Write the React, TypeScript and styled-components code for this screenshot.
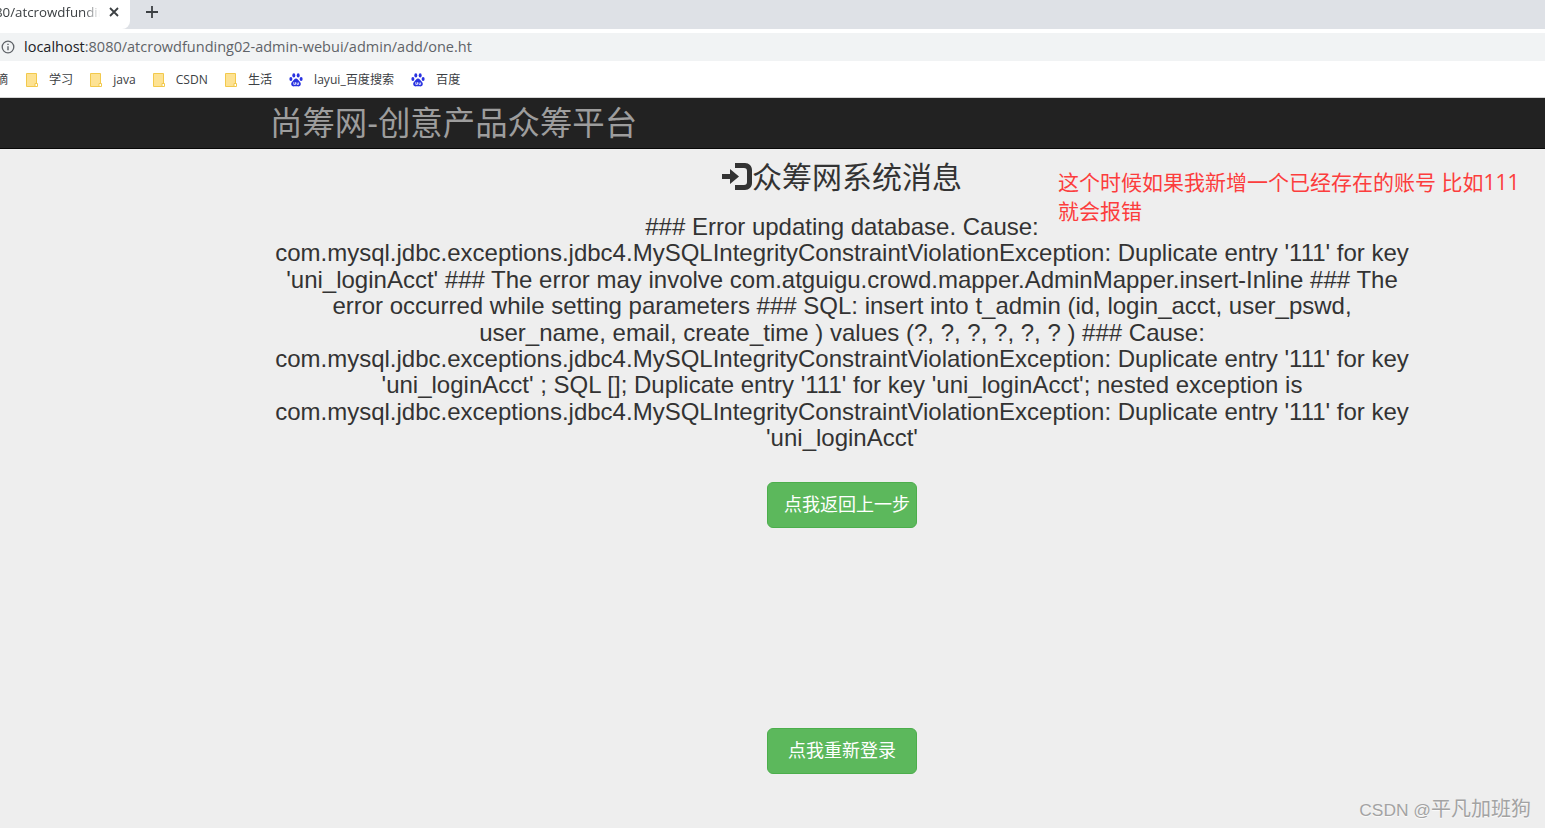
import React from 'react'
import styled, { createGlobalStyle } from 'styled-components'

const CJK = '"Liberation Sans", "Noto Sans CJK SC", sans-serif'

const GlobalStyle = createGlobalStyle`
    html, body {
        margin: 0;
        padding: 0;
        background: #eeeeee;
    }
    body {
        height: 828px;
        overflow: hidden;
        font-family: ${CJK};
    }
`

const Page = styled.div`
    position: relative;
    height: 828px;
    overflow: hidden;
`

const TabBar = styled.div`
    display: flex;
    align-items: flex-start;
    height: 29px;
    background: #dee1e6;
`

const Tab = styled.div`
    display: flex;
    align-items: center;
    width: 130px;
    height: 29px;
    background: #fff;
    border-bottom-right-radius: 8px;
    overflow: hidden;
`

const TabTitle = styled.div`
    width: 100px;
    flex: none;
    overflow: hidden;
    white-space: nowrap;
    font: 13.3px/24px "Open Sans", sans-serif;
    color: #3c4043;
    text-indent: -5px;
    margin-bottom: 5px;
    -webkit-mask-image: linear-gradient(to right, #000 84%, transparent 100%);
    mask-image: linear-gradient(to right, #000 84%, transparent 100%);
`

const CloseButton = styled.svg`
    flex: none;
    width: 10px;
    height: 10px;
    margin: 0 0 5px 9px;
`

const NewTab = styled.svg`
    flex: none;
    width: 14px;
    height: 14px;
    margin: 5px 0 0 15px;
`

const AddressRow = styled.div`
    height: 32px;
    box-sizing: border-box;
    background: #fff;
    padding-top: 4px;
`

const AddressField = styled.div`
    display: flex;
    align-items: center;
    gap: 9px;
    height: 28px;
    padding-left: 1px;
    background: #f1f3f4;
    font: 14.5px/28px "Open Sans", sans-serif;
    color: #5f6368;
    white-space: nowrap;
`

const Host = styled.span`
    color: #202124;
`

const BookmarkBar = styled.div`
    display: flex;
    align-items: center;
    box-sizing: border-box;
    height: 37px;
    padding-top: 1px;
    background: #fff;
    border-bottom: 1px solid #d6d6d6;
    font: 12.1px/35px "Open Sans", "Noto Sans CJK SC", sans-serif;
    color: #3c4043;
    white-space: nowrap;
`

const CutLabel = styled.span`
    width: 8px;
    overflow: hidden;
    direction: rtl;
    margin-right: 18px;
`

const Bookmark = styled.span`
    display: flex;
    align-items: center;
    gap: 11px;
    margin-right: 17px;
`

const Navbar = styled.nav`
    height: 50px;
    background: #222222;
    border-bottom: 1px solid #080808;
    padding-left: 270px;
    font-size: 32.4px;
    line-height: 53px;
    color: #9d9d9d;
    white-space: nowrap;
`

const Main = styled.main`
    width: 1140px;
    margin-left: 272px;
    text-align: center;
    color: #333333;
`

const Heading = styled.h2`
    display: flex;
    justify-content: center;
    align-items: center;
    margin: 12px 0 0;
    height: 33px;
    font-size: 30px;
    font-weight: 400;
    line-height: 33px;
`

const LoginIcon = styled.svg`
    flex: none;
    margin-bottom: 3px;
`

const Message = styled.h3`
    margin: 20px 0 0;
    font-size: 24px;
    font-weight: 400;
    line-height: 26.4px;
`

const Action = styled.button<{ $gap: number }>`
    display: block;
    box-sizing: border-box;
    width: 150px;
    height: 46px;
    margin: ${({ $gap }) => $gap}px auto 0;
    padding: 10px 16px;
    border: 1px solid #4cae4c;
    border-radius: 6px;
    background: #5cb85c;
    color: #fff;
    font-family: ${CJK};
    font-size: 18px;
    line-height: 24px;
    text-align: center;
    white-space: nowrap;
`

const Note = styled.div`
    position: absolute;
    left: 1058px;
    top: 168px;
    width: 470px;
    font-family: "Open Sans", "Noto Sans CJK SC", sans-serif;
    font-size: 21px;
    line-height: 29px;
    color: #fc3d3d;
`

const Watermark = styled.div`
    position: absolute;
    right: 14px;
    top: 796px;
    font-size: 17.4px;
    line-height: 26px;
    color: #a3a3a3;
    text-shadow: 0 1px 1px rgba(255, 255, 255, 0.8);
`

const WatermarkName = styled.span`
    font-size: 20px;
`

const Folder = () => (
    <svg width="12" height="14" viewBox="0 0 12 14">
        <path d="M.5.5h10v13H.5z" fill="#fde293" stroke="#f2c94c" />
        <path d="M9 10.500h2.500v3H9z" fill="#fff" stroke="#f2c94c" />
    </svg>
)

const Paw = () => (
    <svg width="14" height="14" viewBox="0 0 14 14" fill="#2932e1">
        <ellipse cx="4.800" cy="2.400" rx="1.500" ry="2.100" />
        <ellipse cx="9.200" cy="2.400" rx="1.500" ry="2.100" />
        <ellipse cx="1.900" cy="6" rx="1.500" ry="1.900" />
        <ellipse cx="12.100" cy="6" rx="1.500" ry="1.900" />
        <path d="M7 5.600c-1.600 0-2.200 1.600-3.300 2.600C2.400 9.300 1.900 10.300 2.300 11.700 2.700 13.200 4.300 13.600 5.500 13.300c1-.2 2-.2 3 0 1.200.3 2.800-.1 3.200-1.600.4-1.400-.1-2.400-1.400-3.500C9.200 7.200 8.600 5.600 7 5.600z" />
        <path d="M4.800 9.200v2.200h1.700V9.200M8 9.500v1.900h1.600V9.500" fill="none" stroke="#fff" strokeWidth=".8" />
    </svg>
)

const App = () => (
    <Page>
        <GlobalStyle />
        <TabBar>
            <Tab>
                <TabTitle>80/atcrowdfunding02-admin</TabTitle>
                <CloseButton viewBox="0 0 10 10">
                    <path d="M1 1l8 8M9 1L1 9" stroke="#3c4043" strokeWidth="1.800" />
                </CloseButton>
            </Tab>
            <NewTab viewBox="0 0 14 14">
                <path d="M7 1v12M1 7h12" stroke="#3c4043" strokeWidth="1.800" />
            </NewTab>
        </TabBar>
        <AddressRow>
            <AddressField>
                <svg width="14" height="14" viewBox="0 0 14 14" fill="none">
                    <circle cx="7" cy="7" r="5.800" stroke="#5f6368" strokeWidth="1.300" />
                    <path d="M7 6.200v4M7 3.800v1.300" stroke="#5f6368" strokeWidth="1.400" />
                </svg>
                <span>
                    <Host>localhost</Host>:8080/atcrowdfunding02-admin-webui/admin/add/one.ht
                </span>
            </AddressField>
        </AddressRow>
        <BookmarkBar>
            <CutLabel>摘</CutLabel>
            <Bookmark><Folder />学习</Bookmark>
            <Bookmark><Folder />java</Bookmark>
            <Bookmark><Folder />CSDN</Bookmark>
            <Bookmark><Folder />生活</Bookmark>
            <Bookmark><Paw />layui_百度搜索</Bookmark>
            <Bookmark><Paw />百度</Bookmark>
        </BookmarkBar>
        <Navbar>尚筹网-创意产品众筹平台</Navbar>
        <Main>
            <Heading>
                <LoginIcon width="30" height="27" viewBox="0 0 30 27" fill="#333">
                    <path d="M0 11h8V6l9 7.500-9 7.500v-5H0z" />
                    <path d="M13 0h10c4 0 7 3 7 7v13c0 4-3 7-7 7H13v-5h9c2 0 3-1 3-3V8c0-2-1-3-3-3h-9z" />
                </LoginIcon>
                众筹网系统消息
            </Heading>
            <Message>
                ### Error updating database. Cause: com.mysql.jdbc.exceptions.jdbc4.MySQLIntegrityConstraintViolationException: Duplicate entry '111' for key 'uni_loginAcct' ### The error may involve com.atguigu.crowd.mapper.AdminMapper.insert-Inline ### The error occurred while setting parameters ### SQL: insert into t_admin (id, login_acct, user_pswd, user_name, email, create_time ) values (?, ?, ?, ?, ?, ? ) ### Cause: com.mysql.jdbc.exceptions.jdbc4.MySQLIntegrityConstraintViolationException: Duplicate entry '111' for key 'uni_loginAcct' ; SQL []; Duplicate entry '111' for key 'uni_loginAcct'; nested exception is com.mysql.jdbc.exceptions.jdbc4.MySQLIntegrityConstraintViolationException: Duplicate entry '111' for key 'uni_loginAcct'
            </Message>
            <Action $gap={30}>点我返回上一步</Action>
            <Action $gap={200}>点我重新登录</Action>
        </Main>
        <Note>这个时候如果我新增一个已经存在的账号 比如111 就会报错</Note>
        <Watermark>CSDN @<WatermarkName>平凡加班狗</WatermarkName></Watermark>
    </Page>
)

export default App
